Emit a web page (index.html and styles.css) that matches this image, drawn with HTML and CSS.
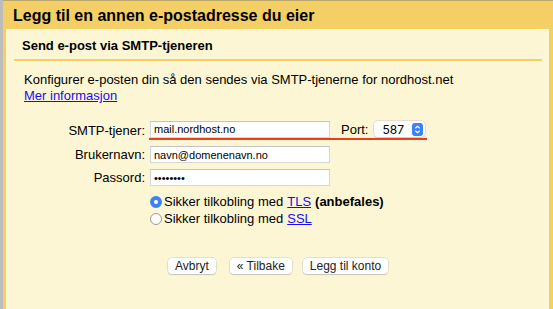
FILE: index.html
```html
<!DOCTYPE html>
<html lang="nb">
<head>
    <meta charset="UTF-8">
    <title>Legg til en annen e-postadresse du eier</title>
    <link rel="stylesheet" href="styles.css">
</head>
<body>
    <div class="gutter"></div>

    <div class="dialog">
        <h1>Legg til en annen e-postadresse du eier</h1>

        <div class="panel">
            <h2>Send e-post via SMTP-tjeneren</h2>

            <p class="intro">Konfigurer e-posten din så den sendes via SMTP-tjenerne for nordhost.net<br>
                <a href="#">Mer informasjon</a></p>

            <div class="form">
                <label>SMTP-tjener:</label>
                <div class="marked">
                    <input class="field" type="text" value="mail.nordhost.no">
                    <span class="port-label">Port:</span>
                    <span class="select">587
                        <svg class="stepper" width="11" height="13" viewBox="0 0 11 13">
                            <rect width="11" height="13" rx="3" fill="#3b82f6"/>
                            <path d="M3.3 5.2 L5.5 3.2 L7.7 5.2 M3.3 7.8 L5.5 9.8 L7.7 7.8" stroke="#fff" stroke-width="1.2" fill="none"/>
                        </svg>
                    </span>
                </div>

                <label>Brukernavn:</label>
                <div><input class="field" type="text" value="navn@domenenavn.no"></div>

                <label>Passord:</label>
                <div><input class="field" type="password" value="passord1"></div>

                <span></span>
                <div class="choices">
                    <div class="choice">
                        <span class="radio on"></span>
                        Sikker tilkobling med <a href="#">TLS</a> <b>(anbefales)</b>
                    </div>
                    <div class="choice">
                        <span class="radio"></span>
                        Sikker tilkobling med <a href="#">SSL</a>
                    </div>
                </div>
            </div>

            <div class="buttons">
                <button>Avbryt</button>
                <button class="back">« Tilbake</button>
                <button>Legg til konto</button>
            </div>
        </div>
    </div>
</body>
</html>
```

FILE: styles.css
```css
* {
    margin: 0;
    padding: 0;
    box-sizing: border-box;
}

body {
    font-family: 'Liberation Sans', Arial, sans-serif;
    color: #000;
    display: flex;
    height: 309px;
    overflow: hidden;
    background: #fdf6d5;
}

/* Strimmel til venstre */
.gutter {
    width: 3px;
    background: #bcbcbc;
}

.dialog {
    flex: 1;
    background: #f4cf65;
    border-top: 1px solid #b9a76c;
    padding: 0 4px 0 3px;
    display: flex;
    flex-direction: column;
}

h1 {
    font-size: 16px;
    font-weight: bold;
    height: 28px;
    line-height: 30px;
    padding-left: 7px;
}

.panel {
    flex: 1;
    background: #fdf6d5;
    padding: 0 7px 0 8px;
}

h2 {
    font-size: 13px;
    font-weight: bold;
    padding: 9px 0 0 8px;
    height: 32px;
    border-bottom: 2px solid #f4cf65;
}

.intro {
    font-size: 13px;
    line-height: 16px;
    padding: 11px 0 0 10px;
}

a {
    color: #1a0dee;
}

/* Skjema */
.form {
    display: grid;
    grid-template-columns: 131px auto;
    column-gap: 5px;
    row-gap: 6px;
    margin-top: 17px;
    font-size: 13px;
    align-items: center;
}

.form label {
    text-align: right;
}

.marked {
    display: flex;
    align-items: center;
    width: 278px;
    border-bottom: 2px solid #e8401c;
    margin-left: -1px;
    padding-left: 1px;
    height: 19px;
    padding-bottom: 1px;
}

.field {
    width: 180px;
    height: 17px;
    border: 1px solid #d6d6d6;
    border-top-color: #c3c3c3;
    background: #fff;
    font-family: 'Liberation Sans', Arial, sans-serif;
    font-size: 11px;
    padding: 0 3px;
    color: #000;
}

.port-label {
    margin-left: 11px;
}

.select {
    margin-left: 6px;
    width: 51px;
    height: 16px;
    background: #fff;
    border-radius: 4px;
    box-shadow: 0 0 0 0.5px #c9c9c9, 0 1px 1px rgba(0, 0, 0, 0.15);
    font-family: Inter, sans-serif;
    font-size: 12px;
    display: flex;
    align-items: center;
    justify-content: space-between;
    padding: 0 2px 0 8px;
}

.choices {
    margin-top: 1px;
}

.choice {
    display: flex;
    align-items: center;
    height: 17px;
}

.radio {
    width: 12px;
    height: 12px;
    border-radius: 50%;
    border: 1px solid #9a9a9a;
    background: #fff;
    margin-right: 2px;
}

.radio.on {
    border: 4px solid #3b82f6;
    background: #fff;
}

.choice a {
    margin: 0 4px;
}

.buttons {
    display: flex;
    gap: 11px;
    padding-left: 154px;
    margin-top: 31px;
}

.buttons .back {
    margin-left: 3px;
}

button {
    font-family: 'Liberation Sans', Arial, sans-serif;
    font-size: 12px;
    background: #fff;
    border: none;
    border-radius: 4px;
    box-shadow: 0 0 0 0.5px #c9c9c9, 0 1px 1px rgba(0, 0, 0, 0.2);
    height: 16px;
    padding: 0 7px;
    color: #222;
}
```
